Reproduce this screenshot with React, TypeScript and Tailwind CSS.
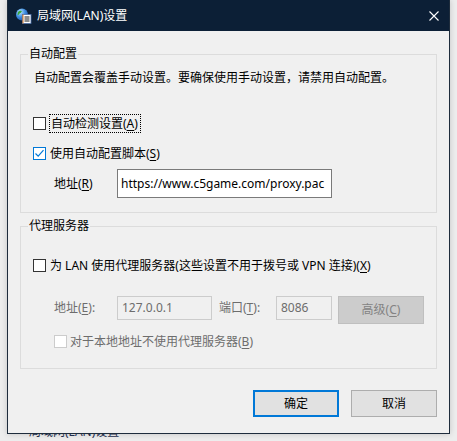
import React from 'react'

const font = "font-['Noto_Sans','Noto_Sans_CJK_SC',sans-serif]"

function Box({ checked = false, disabled = false }: { checked?: boolean; disabled?: boolean }) {
  const border = disabled ? 'border-[#cccccc]' : checked ? 'border-[#0078d7]' : 'border-[#333333]'
  return (
    <div className={`w-[13px] h-[13px] shrink-0 border bg-white flex items-center justify-center ${border}`}>
      {checked && (
        <svg width="11" height="11" viewBox="0 0 11 11">
          <path d="M1.5 5.5 L4.2 8.2 L9.5 2.2" fill="none" stroke="#0078d7" strokeWidth="1.2" />
        </svg>
      )}
    </div>
  )
}

function Key({ children }: { children: React.ReactNode }) {
  return <span className="underline underline-offset-2">{children}</span>
}

function TitleIcon() {
  return (
    <svg width="16" height="16" viewBox="0 0 16 16">
      <defs>
        <radialGradient id="g" cx="0.35" cy="0.3" r="0.8">
          <stop offset="0" stopColor="#bfe6ff" />
          <stop offset="0.5" stopColor="#3f8fe0" />
          <stop offset="1" stopColor="#1d4fa8" />
        </radialGradient>
      </defs>
      <circle cx="6" cy="6.5" r="6" fill="url(#g)" />
      <path d="M2 4 Q4 2 6 3 Q5 5 3.5 5.5 Q3 7 1.5 7 Z" fill="#3aa53a" />
      <path d="M6.5 8 Q8.5 7 10 8.5 Q9 11 7 11.5 Z" fill="#3aa53a" />
      <rect x="6.5" y="6.5" width="8.5" height="9" fill="#ffffff" stroke="#4a6ea8" strokeWidth="0.8" />
      <rect x="6.5" y="6.5" width="1" height="9" fill="#e07a1f" />
      <rect x="8.5" y="8.5" width="5" height="1" fill="#1a1a1a" />
      <rect x="8.5" y="10.5" width="5" height="1" fill="#1a1a1a" />
      <rect x="8.5" y="12.5" width="5" height="1" fill="#1a1a1a" />
    </svg>
  )
}

export default function App() {
  return (
    <div className={`w-[457px] h-[441px] overflow-hidden bg-[#ededed] text-[12px] leading-4 text-black ${font}`}>
      <div className="ml-[7px] w-[443px] h-[434px] flex flex-col border-x border-b border-[#1e2c3c] bg-[#f0f0f0] shadow-[0_0_6px_rgba(0,0,0,0.18)]">
        <div className="h-[31px] shrink-0 bg-[#0c1f36] flex items-center">
          <div className="ml-[8px]">
            <TitleIcon />
          </div>
          <span className="ml-[5px] text-white">局域网(LAN)设置</span>
          <svg className="ml-auto mr-[10px]" width="10" height="10" viewBox="0 0 10 10">
            <path d="M0.5 0.5 L9.5 9.5 M9.5 0.5 L0.5 9.5" stroke="#ffffff" strokeWidth="1.1" />
          </svg>
        </div>

        <fieldset className="mx-[12px] mt-[15px] border border-[#dcdcdc] p-0 pb-[14px]">
          <legend className="ml-[7px] px-[1px] leading-4">自动配置</legend>
          <p className="mt-[8px] ml-[13px]">自动配置会覆盖手动设置。要确保使用手动设置，请禁用自动配置。</p>
          <div className="mt-[28px] ml-[12px] h-[19px] flex items-center">
            <Box />
            <div className="ml-[3px] h-[19px] px-[1px] pr-[2px] flex items-center border border-dotted border-black">
              自动检测设置(<Key>A</Key>)
            </div>
          </div>
          <div className="mt-[11px] ml-[12px] h-[19px] flex items-center">
            <Box checked />
            <span className="ml-[4px]">
              使用自动配置脚本(<Key>S</Key>)
            </span>
          </div>
          <div className="mt-[6px] flex items-center">
            <span className="ml-[33px] w-[63px]">
              地址(<Key>R</Key>)
            </span>
            <div className="w-[215px] h-[29px] border border-[#7a7a7a] bg-white pl-[3px] flex items-center text-[12px] whitespace-nowrap overflow-hidden">
              https://www.c5game.com/proxy.pac
            </div>
          </div>
        </fieldset>

        <fieldset className="mx-[12px] mt-[5px] border border-[#dcdcdc] p-0 pb-[17px]">
          <legend className="ml-[7px] px-[1px] leading-4">代理服务器</legend>
          <div className="mt-[22px] ml-[12px] h-[19px] flex items-center">
            <Box />
            <span className="ml-[4px]">
              为 LAN 使用代理服务器(这些设置不用于拨号或 VPN 连接)(<Key>X</Key>)
            </span>
          </div>
          <div className="mt-[21px] flex items-start text-[#6d6d6d]">
            <span className="ml-[33px] w-[63px] h-[24px] flex items-center">
              地址(<Key>E</Key>):
            </span>
            <div className="w-[95px] h-[24px] border border-[#cccccc] pl-[4px] flex items-center">127.0.0.1</div>
            <span className="ml-[7px] w-[57px] h-[24px] flex items-center">
              端口(<Key>T</Key>):
            </span>
            <div className="w-[56px] h-[24px] border border-[#cccccc] pl-[4px] flex items-center">8086</div>
            <div className="ml-[6px] w-[86px] h-[28px] border border-[#bfbfbf] bg-[#cccccc] text-[#838383] flex items-center justify-center">
              高级(<Key>C</Key>)
            </div>
          </div>
          <div className="mt-[8px] ml-[33px] h-[19px] flex items-center text-[#6d6d6d]">
            <Box disabled />
            <span className="ml-[3px]">
              对于本地地址不使用代理服务器(<Key>B</Key>)
            </span>
          </div>
        </fieldset>

        <div className="mt-[21px] mr-[12px] flex justify-end gap-[12px]">
          <div className="w-[86px] h-[27px] border-2 border-[#0078d7] bg-[#e1e1e1] flex items-center justify-center">确定</div>
          <div className="w-[86px] h-[27px] border border-[#adadad] bg-[#e1e1e1] flex items-center justify-center">取消</div>
        </div>
      </div>
      <div className="h-[7px] overflow-hidden pl-[29px]">
        <div className="-mt-[10px] text-[#1f2f4d]">局域网(LAN)设置</div>
      </div>
    </div>
  )
}
